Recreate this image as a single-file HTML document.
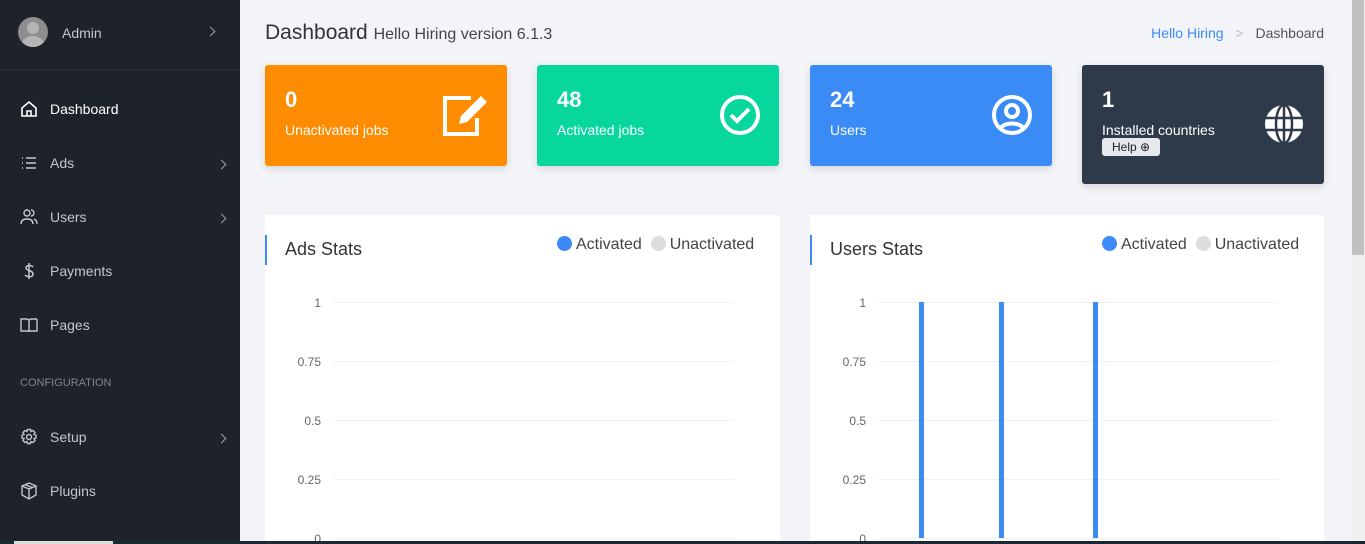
<!DOCTYPE html>
<html style="width:1365px;height:544px;overflow:hidden"><head><meta charset="utf-8"><style>
*{box-sizing:border-box;margin:0;padding:0}
body{width:1365px;height:544px;overflow:hidden;background:#f3f4f8;font-family:"Liberation Sans",Arial,sans-serif;position:relative}
.sb{position:absolute;left:0;top:0;width:240px;height:544px;background:#1e222a;color:#c3c7cd}
.sb .user{height:70px;border-bottom:1px solid #2d323b;position:relative}
.av{position:absolute;left:18px;top:17px;width:30px;height:30px;border-radius:50%;background:#8e8e8e;overflow:hidden}
.av:before{content:"";position:absolute;left:9px;top:5px;width:12px;height:12px;border-radius:50%;background:#b5b5b5}
.av:after{content:"";position:absolute;left:4px;top:19px;width:22px;height:16px;border-radius:50%;background:#b5b5b5}
.item{position:absolute;left:0;width:240px;font-size:14px;color:#c3c7cd}
.item svg{position:absolute;left:20px;top:-1px}
.item span{position:absolute;left:50px;top:0}
.chev{position:absolute;left:218px;top:6px;width:7px;height:7px;border-right:1.3px solid #9aa0a8;border-top:1.3px solid #9aa0a8;transform:rotate(45deg)}
.hd{position:absolute;left:265px;top:21px;font-size:21px;color:#333}
.hd small{font-size:16px;color:#444}
.bc{position:absolute;right:41px;top:25px;font-size:14px;color:#555}
.bc a{color:#3d8af7;text-decoration:none}
.card{position:absolute;top:65px;width:242px;height:101px;border-radius:3px;color:#fff;box-shadow:0 3px 8px rgba(0,0,0,.12)}
.card b{position:absolute;left:20px;top:22px;font-size:22px}
.card i{position:absolute;left:20px;top:57px;font-size:14px;font-style:normal}
.card svg{position:absolute}
.panel{position:absolute;top:215px;height:329px;background:#fff;width:515px;overflow:hidden}
.panel .t{position:absolute;left:0;top:20px;height:30px;border-left:2px solid #3d8af7;padding-left:18px;font-size:18px;color:#333;line-height:28px}
.lg{position:absolute;top:21px;font-size:16px;color:#444}
.dot{display:inline-block;width:15px;height:15px;border-radius:50%;vertical-align:-2px;margin-right:4px}
.yl{position:absolute;font-size:12px;color:#666;text-align:right;width:40px}
.gl{position:absolute;height:1px;background:#f0f0f0}
.bar{position:absolute;width:5px;background:#3d8af7;top:87px;height:236px}
</style></head><body>
<div class="sb">
 <div class="user"><div class="av"></div><span style="position:absolute;left:62px;top:25px;font-size:14px">Admin</span><div class="chev" style="left:207px;top:28px"></div></div>
 <div class="item" style="top:101px;color:#fff"><svg width="18" height="18" viewBox="0 0 18 18" fill="none" stroke="#fff" stroke-width="1.6"><path d="M2 8L9 2l7 6v8H2z"/><path d="M7 16v-5h4v5"/></svg><span>Dashboard</span></div>
 <div class="item" style="top:155px"><svg width="18" height="18" viewBox="0 0 18 18" stroke="#c3c7cd" stroke-width="1.4"><path d="M2 4h1M2 9h1M2 14h1M6 4h10M6 9h10M6 14h10"/></svg><span>Ads</span><div class="chev"></div></div>
 <div class="item" style="top:209px"><svg width="18" height="18" viewBox="0 0 18 18" fill="none" stroke="#c3c7cd" stroke-width="1.4"><circle cx="7" cy="5" r="3"/><path d="M1 16c0-4 3-5 6-5s6 1 6 5M11 2a3 3 0 010 6M14 11c2 1 3 2 3 5"/></svg><span>Users</span><div class="chev"></div></div>
 <div class="item" style="top:263px"><svg width="18" height="18" viewBox="0 0 18 18" fill="none" stroke="#c3c7cd" stroke-width="1.5"><path d="M9 1v16M13 5c-1-2-7-2-7 1s7 2 7 6-6 3-8 1"/></svg><span>Payments</span></div>
 <div class="item" style="top:317px"><svg width="18" height="18" viewBox="0 0 18 18" fill="none" stroke="#c3c7cd" stroke-width="1.4"><path d="M1 3h6c1 0 2 1 2 2v11c0-1-1-1-2-1H1zM17 3h-6c-1 0-2 1-2 2M17 3v12h-6c-1 0-2 0-2 1"/></svg><span>Pages</span></div>
 <div style="position:absolute;left:20px;top:377px;font-size:11px;color:#7e848c">CONFIGURATION</div>
 <div class="item" style="top:429px"><svg width="18" height="18" viewBox="0 0 18 18" fill="none" stroke="#c3c7cd" stroke-width="1.4"><circle cx="9" cy="9" r="2.5"/><path d="M7.5 1.5h3l.5 2 2-1 2 2-1 2 2 .5v3l-2 .5 1 2-2 2-2-1-.5 2h-3l-.5-2-2 1-2-2 1-2-2-.5v-3l2-.5-1-2 2-2 2 1z"/></svg><span>Setup</span><div class="chev"></div></div>
 <div class="item" style="top:483px"><svg width="18" height="18" viewBox="0 0 18 18" fill="none" stroke="#c3c7cd" stroke-width="1.4"><path d="M9 1l7 3v9l-7 4-7-4V4zM2 4l7 3 7-3M9 7v10M5 2.5l7 3"/></svg><span>Plugins</span></div>
</div>
<div class="hd">Dashboard <small>Hello Hiring version 6.1.3</small></div>
<div class="bc"><a>Hello Hiring</a> <span style="color:#bbb;margin:0 8px">&gt;</span> Dashboard</div>

<div class="card" style="left:265px;background:#fe8c00"><b>0</b><i>Unactivated jobs</i>
<svg style="left:176px;top:29px" width="48" height="44" viewBox="0 0 48 44"><path d="M30 4H4v36h32V24" fill="none" stroke="#fff" stroke-width="4"/><path d="M40 2l6 6-20 20-8 2 2-8z" fill="#fff"/></svg></div>
<div class="card" style="left:537px;background:#07d79c"><b>48</b><i>Activated jobs</i>
<svg style="left:182px;top:29px" width="42" height="42" viewBox="0 0 42 42" fill="none" stroke="#fff" stroke-width="4"><circle cx="21" cy="21" r="18"/><path d="M12 21l6 6 12-12"/></svg></div>
<div class="card" style="left:810px;background:#3a8bf6"><b>24</b><i>Users</i>
<svg style="left:181px;top:29px" width="42" height="42" viewBox="0 0 42 42" fill="none" stroke="#fff" stroke-width="4"><circle cx="21" cy="21" r="18"/><circle cx="21" cy="17" r="6"/><path d="M10 34c3-6 19-6 22 0"/></svg></div>
<div class="card" style="left:1082px;background:#2e3a4a;height:119px"><b>1</b><i>Installed countries</i>
<span style="position:absolute;left:20px;top:73px;background:#e5e8ec;color:#222;font-size:12px;border-radius:3px;padding:2px 10px">Help ⊕</span>
<svg style="left:182px;top:39px" width="40" height="40" viewBox="0 0 40 40"><circle cx="20" cy="20" r="19" fill="#fff"/><g stroke="#2e3a4a" stroke-width="2.5" fill="none"><ellipse cx="20" cy="20" rx="8" ry="19"/><path d="M1 14h38M1 26h38M20 1v38"/></g></svg></div>

<div class="panel" style="left:265px">
 <div class="t">Ads Stats</div>
 <div class="lg" style="left:292px"><span class="dot" style="background:#3d8af7"></span>Activated &nbsp;<span class="dot" style="background:#dcdcdc"></span>Unactivated</div>
 <div class="yl" style="left:16px;top:81px">1</div><div class="gl" style="left:68px;width:401px;top:87px"></div>
 <div class="yl" style="left:16px;top:140px">0.75</div><div class="gl" style="left:68px;width:401px;top:146px"></div>
 <div class="yl" style="left:16px;top:199px">0.5</div><div class="gl" style="left:68px;width:401px;top:205px"></div>
 <div class="yl" style="left:16px;top:258px">0.25</div><div class="gl" style="left:68px;width:401px;top:264px"></div>
 <div class="yl" style="left:16px;top:317px">0</div><div class="gl" style="left:68px;width:401px;top:323px"></div>
</div>
<div class="panel" style="left:810px;width:514px">
 <div class="t">Users Stats</div>
 <div class="lg" style="left:292px"><span class="dot" style="background:#3d8af7"></span>Activated &nbsp;<span class="dot" style="background:#dcdcdc"></span>Unactivated</div>
 <div class="yl" style="left:16px;top:81px">1</div><div class="gl" style="left:68px;width:400px;top:87px"></div>
 <div class="yl" style="left:16px;top:140px">0.75</div><div class="gl" style="left:68px;width:400px;top:146px"></div>
 <div class="yl" style="left:16px;top:199px">0.5</div><div class="gl" style="left:68px;width:400px;top:205px"></div>
 <div class="yl" style="left:16px;top:258px">0.25</div><div class="gl" style="left:68px;width:400px;top:264px"></div>
 <div class="yl" style="left:16px;top:317px">0</div><div class="gl" style="left:68px;width:400px;top:323px"></div>
 <div class="bar" style="left:109px"></div><div class="bar" style="left:189px"></div><div class="bar" style="left:283px"></div>
</div>
<div style="position:absolute;left:1351px;top:0;width:14px;height:544px;background:#f0f0f0"></div>
<div style="position:absolute;left:1352px;top:0;width:12px;height:255px;background:#c1c1c1"></div>
<div style="position:absolute;left:0;top:541px;width:1365px;height:3px;background:#1b2a30"></div>
<div style="position:absolute;left:14px;top:541px;width:99px;height:3px;background:#ddd"></div>
</body></html>
